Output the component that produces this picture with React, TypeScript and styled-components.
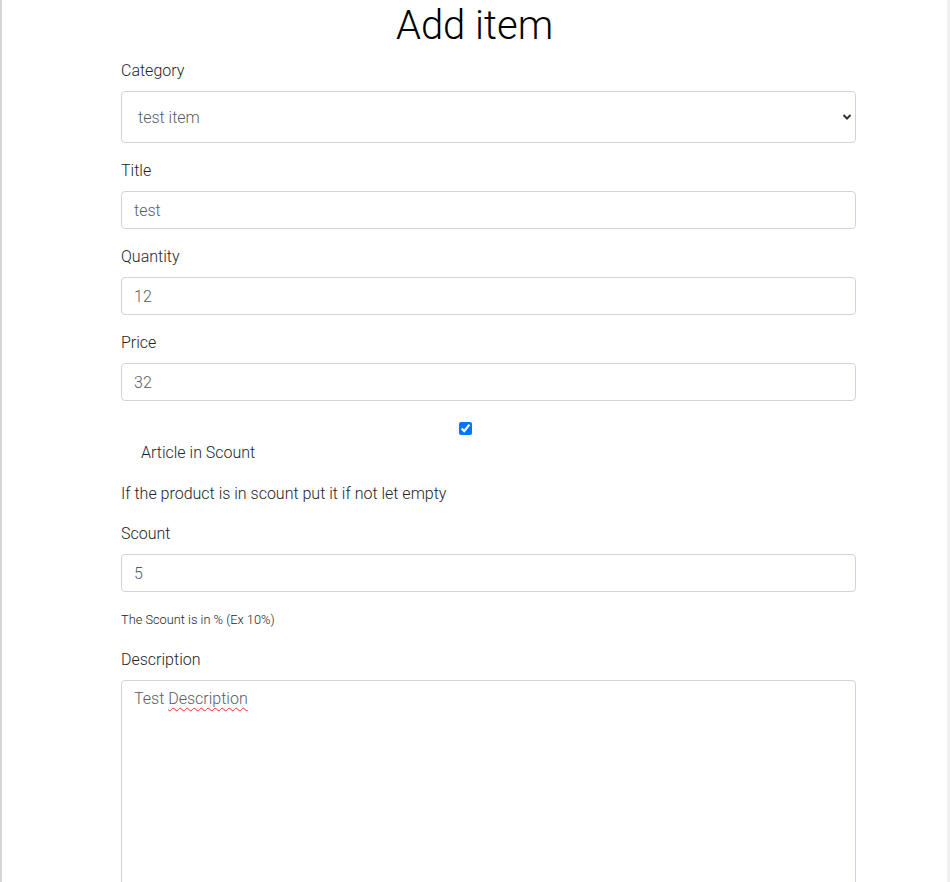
import React from "react";
import styled, { createGlobalStyle } from "styled-components";

const Global = createGlobalStyle`
  html, body { margin: 0; padding: 0; background: #fff; }
  body {
    font-family: Roboto, "Noto Sans", "Liberation Sans", sans-serif;
    font-size: 16px;
    font-weight: 300;
    line-height: 1.5;
    color: #212529;
  }
  * { box-sizing: border-box; }
`;

const Frame = styled.div`
  position: relative;
  width: 950px;
  height: 882px;
  overflow: hidden;
  border-left: 2px solid #d6d6d6;
  border-right: 3px solid #f1f1f1;
`;

const Thumb = styled.div`
  position: absolute;
  left: -2px;
  top: 22px;
  width: 2px;
  height: 46px;
  background: #a9a9a9;
`;

const Heading = styled.h1`
  margin: 0 0 8px;
  padding-top: 2px;
  text-align: center;
  font-family: Roboto, "Noto Sans", sans-serif;
  font-weight: 300;
  font-size: 40px;
  line-height: 48px;
  color: #000;
`;

const Form = styled.form`
  width: 735px;
  margin-left: 119px;
`;

const Group = styled.div`
  margin-bottom: 15px;
`;

const Label = styled.label`
  display: block;
  font-size: 16px;
  line-height: 24px;
  padding-top: 1px;
  margin-bottom: 8px;
  font-weight: 300;
  color: #212529;
`;

const Input = styled.input`
  display: block;
  width: 100%;
  height: 38px;
  padding: 6px 12px;
  font-family: Roboto, "Noto Sans", sans-serif;
  font-size: 16px;
  font-weight: 300;
  line-height: 24px;
  color: #555d66;
  background: #fff;
  border: 1px solid #ced4da;
  border-radius: 4px;
  outline: none;
`;

const SelectWrap = styled.div`
  position: relative;
`;

const Select = styled.select`
  display: block;
  width: 100%;
  height: 52px;
  padding: 0 16px;
  font-family: Roboto, "Noto Sans", sans-serif;
  font-size: 16px;
  font-weight: 300;
  color: #555d66;
  background: #fff;
  border: 1px solid #ced4da;
  border-radius: 4px;
  appearance: none;
  outline: none;
`;

const Chevron = styled.svg`
  position: absolute;
  right: 4px;
  top: 21px;
  width: 10px;
  height: 10px;
  pointer-events: none;
`;

const CheckRow = styled.div`
  padding: 6px 0 0 20px;
  margin-bottom: 16px;
`;

const Check = styled.input`
  display: block;
  width: 13px;
  height: 13px;
  margin: 0 0 5px 318px;
  accent-color: #0075ff;
`;

const CheckLabel = styled.label`
  display: block;
  padding-top: 1px;
  line-height: 24px;
`;

const Note = styled.p`
  margin: 0 0 15px;
  padding-top: 1px;
  line-height: 24px;
`;

const Small = styled.small`
  display: block;
  margin-top: 18px;
  padding-bottom: 3px;
  font-size: 12.8px;
  font-weight: 300;
  line-height: 19px;
  color: #212529;
`;

const AreaWrap = styled.div`
  position: relative;
`;

const Area = styled.textarea`
  display: block;
  width: 100%;
  height: 240px;
  padding: 6px 12px;
  font-family: Roboto, "Noto Sans", sans-serif;
  font-size: 16px;
  font-weight: 300;
  line-height: 24px;
  color: #555d66;
  border: 1px solid #ced4da;
  border-radius: 4px;
  resize: none;
  outline: none;
`;

const Squiggle = styled.span`
  position: absolute;
  left: 13px;
  top: 7px;
  font-size: 16px;
  font-weight: 300;
  line-height: 24px;
  color: transparent;
  pointer-events: none;
  white-space: pre;
`;

const Wavy = styled.span`
  text-decoration: underline wavy #ff2a2a;
  text-decoration-thickness: 1px;
  text-underline-offset: 3px;
`;

export default function App() {
  return (
    <>
      <Global />
      <Frame>
        <Thumb />
        <Heading>Add item</Heading>
        <Form onSubmit={(e) => e.preventDefault()}>
          <Group>
            <Label>Category</Label>
            <SelectWrap>
              <Select defaultValue="test item">
                <option>test item</option>
              </Select>
              <Chevron viewBox="0 0 10 10">
                <path d="M1.5 3 L5 6.5 L8.5 3" fill="none" stroke="#333" strokeWidth="2" />
              </Chevron>
            </SelectWrap>
          </Group>
          <Group>
            <Label>Title</Label>
            <Input defaultValue="test" />
          </Group>
          <Group>
            <Label>Quantity</Label>
            <Input defaultValue="12" />
          </Group>
          <Group>
            <Label>Price</Label>
            <Input defaultValue="32" />
          </Group>
          <CheckRow>
            <Check type="checkbox" defaultChecked />
            <CheckLabel>Article in Scount</CheckLabel>
          </CheckRow>
          <Note>If the product is in scount put it if not let empty</Note>
          <Group>
            <Label>Scount</Label>
            <Input defaultValue="5" />
            <Small>The Scount is in % (Ex 10%)</Small>
          </Group>
          <Group>
            <Label>Description</Label>
            <AreaWrap>
              <Area defaultValue="Test Description" spellCheck={false} />
              <Squiggle>
                {"Test "}
                <Wavy>Description</Wavy>
              </Squiggle>
            </AreaWrap>
          </Group>
        </Form>
      </Frame>
    </>
  );
}
